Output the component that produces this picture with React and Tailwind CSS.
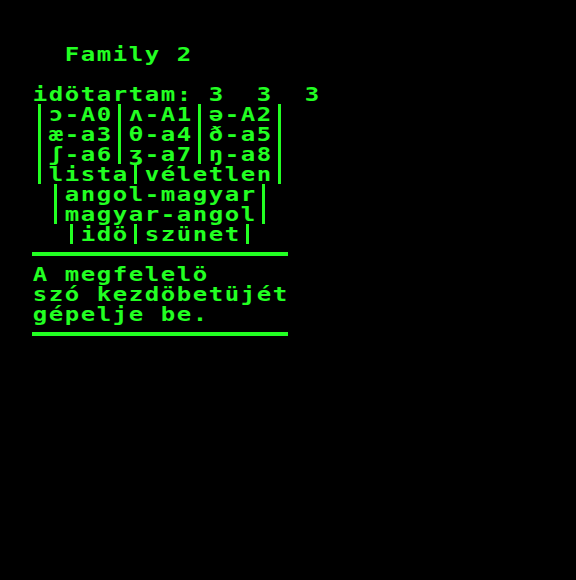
const GREEN = 'text-[#22ff22]';

// a képernyő sorai, 16x20 pixeles cellákban
const sorok = [
  '  Family 2',
  '',
  'idötartam: 3  3  3',
  '|ɔ-A0|ʌ-A1|ə-A2|',
  '|æ-a3|θ-a4|ð-a5|',
  '|ʃ-a6|ʒ-a7|ŋ-a8|',
  '|lista|véletlen|',
  ' |angol-magyar|',
  ' |magyar-angol|',
  '  |idö|szünet|',
  '---',
  'A megfelelö',
  'szó kezdöbetüjét',
  'gépelje be.',
  '---',
];

function Cella({ c }) {
  if (c === '|') {
    return (
      <div className="w-4 h-5 shrink-0">
        <div className="ml-[6px] w-[3px] h-full bg-[#22ff22]" />
      </div>
    );
  }
  return (
    <div className="w-4 h-5 shrink-0 flex justify-center whitespace-pre">
      <span className="inline-block scale-x-[1.2]">{c}</span>
    </div>
  );
}

function Sor({ szoveg }) {
  if (szoveg === '---') {
    return (
      <div className="h-5 flex items-center">
        <div className="w-64 h-1 bg-[#22ff22]" />
      </div>
    );
  }
  return (
    <div className="h-5 flex">
      {Array.from(szoveg).map((c, i) => (
        <Cella key={i} c={c} />
      ))}
    </div>
  );
}

export default function App() {
  return (
    <div className={`w-full h-[580px] bg-black pt-[44px] pl-8 font-['DejaVu_Sans_Mono',monospace] font-bold text-[20px] leading-5 ${GREEN}`}>
      {sorok.map((s, i) => (
        <Sor key={i} szoveg={s} />
      ))}
    </div>
  );
}
